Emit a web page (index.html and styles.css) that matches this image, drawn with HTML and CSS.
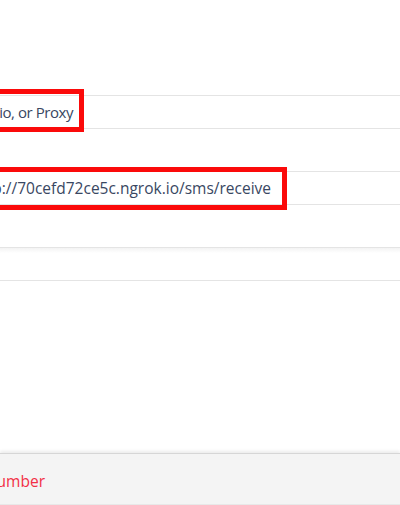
FILE: index.html
```html
<!DOCTYPE html>
<html>
<head>
<meta charset="utf-8">
<link rel="stylesheet" href="styles.css">
</head>
<body>
<div class="page">
  <div class="field field-first">
    <div class="value value-1"><span>Webhook, TwiML Bin, Function, Studio, or Proxy</span></div>
    <div class="mark mark-1"></div>
  </div>
  <div class="field field-second">
    <div class="value value-2"><span>http://70cefd72ce5c.ngrok.io/sms/receive</span></div>
    <div class="mark mark-2"></div>
  </div>
  <div class="field field-third"></div>
  <div class="spacer"></div>
  <div class="footer">
    <div class="value value-3"><span class="danger">Release this Number</span></div>
  </div>
</div>
</body>
</html>
```

FILE: styles.css
```css
html, body {
  margin: 0;
  padding: 0;
  background: #ffffff;
  overflow: hidden;
}
body {
  width: 400px;
  height: 505px;
  font-family: "Open Sans", Lato, sans-serif;
  font-size: 15.5px;
  color: #394762;
}
.page {
  display: flex;
  flex-direction: column;
  padding-top: 95px;
}
.field {
  position: relative;
  height: 32px;
  border-top: 1px solid #e4e4e4;
  border-bottom: 1px solid #e4e4e4;
  display: flex;
  align-items: center;
}
.field-second {
  margin-top: 42px;
}
.field-third {
  margin-top: 42px;
  background: linear-gradient(to bottom, #f3f3f3 0, #ffffff 5px);
}
.value {
  display: flex;
  justify-content: flex-end;
  white-space: nowrap;
  flex: none;
}
.value-1 {
  width: 73px;
  font-size: 15px;
  letter-spacing: -0.45px;
}
.value-2 { width: 271px; }
.value-3 { width: 45px; }
.mark {
  position: absolute;
  border: 5px solid #fb0a0a;
  box-sizing: border-box;
  left: -10px;
}
.mark-1 {
  top: -7px;
  width: 94px;
  height: 43px;
}
.mark-2 {
  top: -5px;
  width: 297px;
  height: 43px;
}
.spacer {
  height: 172px;
}
.footer {
  height: 46px;
  padding-top: 4px;
  background: #f4f4f4;
  border-top: 1px solid #d6d6d6;
  border-bottom: 1px solid #e8e8e8;
  box-shadow: 0 -2px 3px rgba(0, 0, 0, 0.08);
  display: flex;
  align-items: center;
}
.danger {
  color: #f22f46;
}
```
